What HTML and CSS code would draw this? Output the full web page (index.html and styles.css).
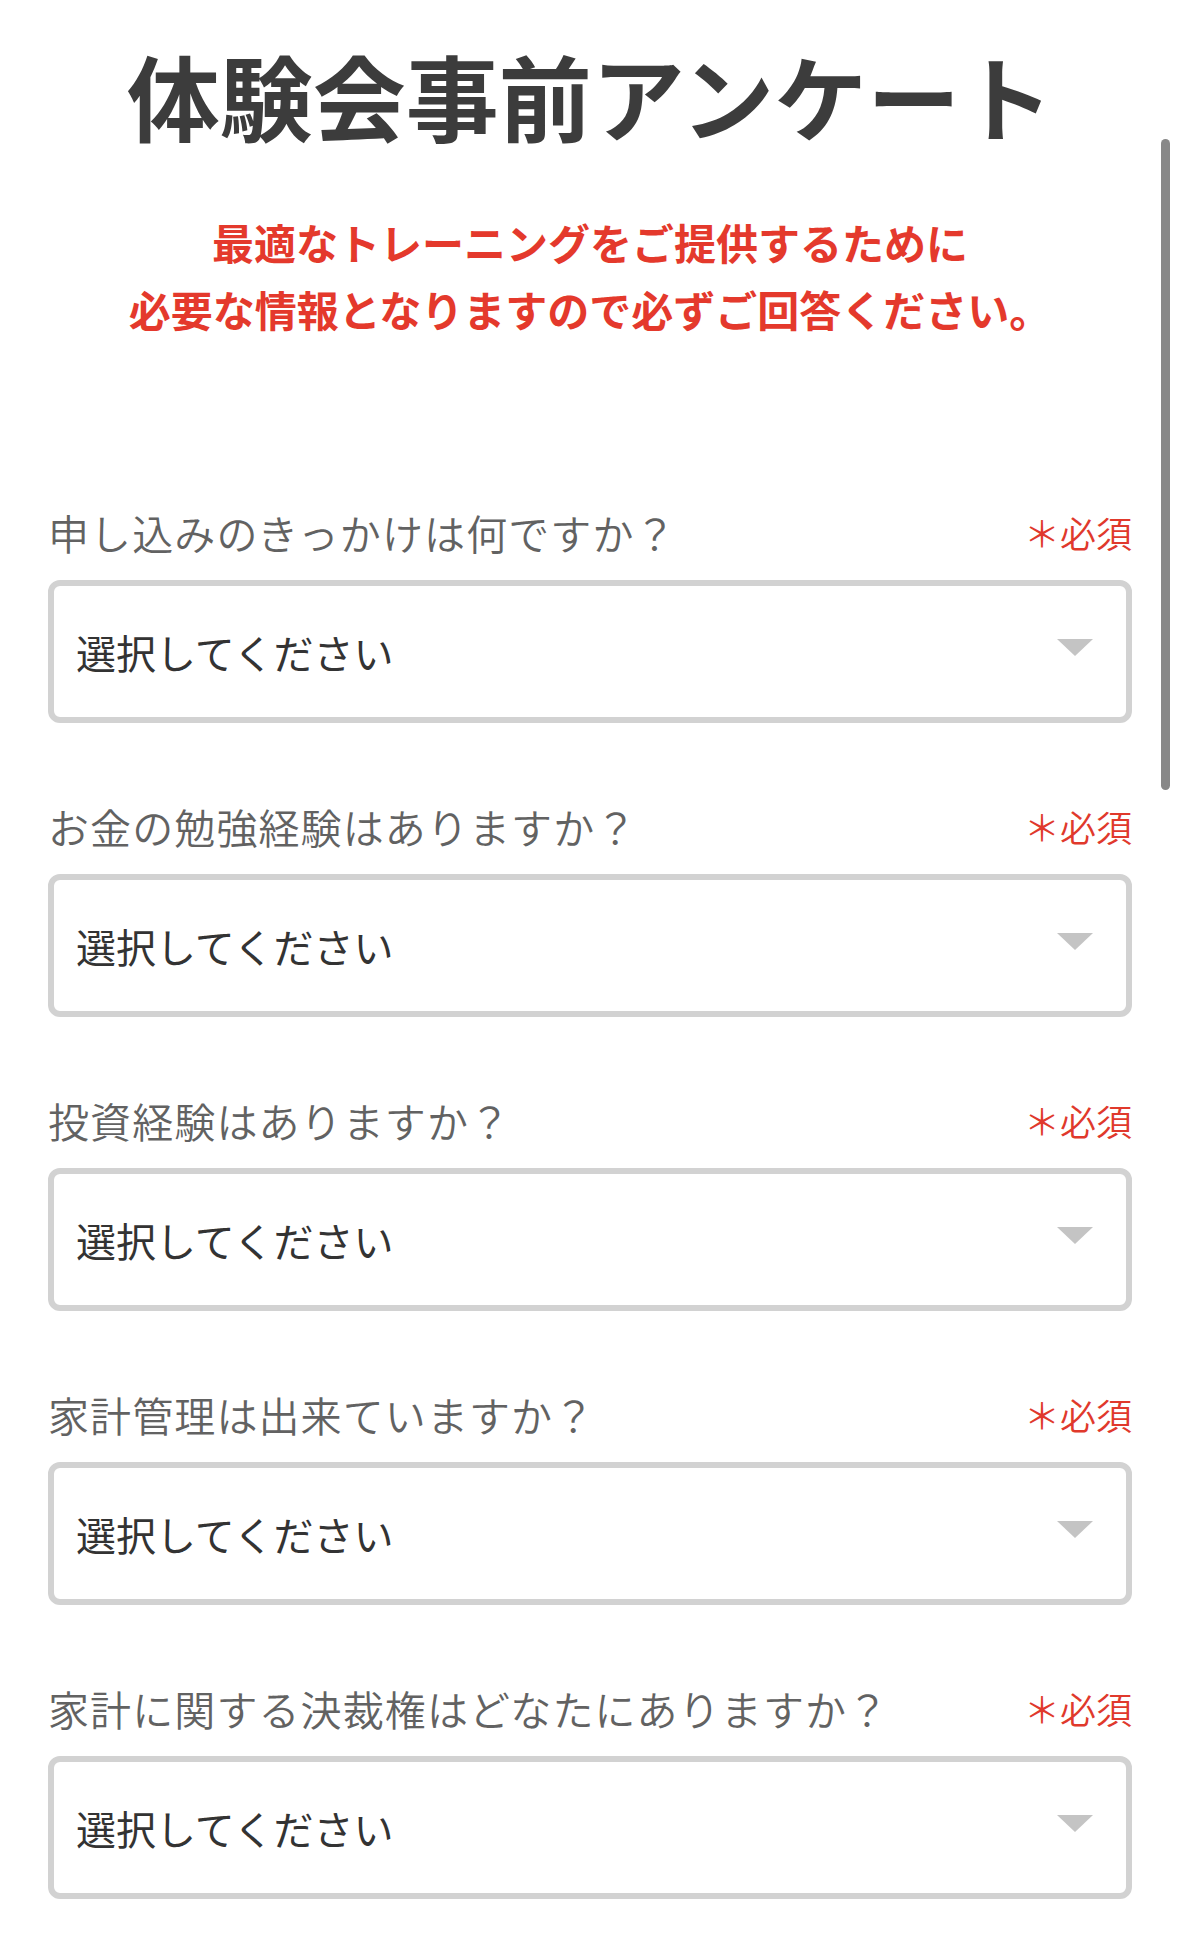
FILE: index.html
```html
<!DOCTYPE html>
<html lang="ja">
<head>
<meta charset="utf-8">
<title>体験会事前アンケート</title>
<link rel="stylesheet" href="styles.css">
</head>
<body>
<div class="page">
  <h1 class="title">体験会事前アンケート</h1>
  <p class="lead">最適なトレーニングをご提供するために<br>必要な情報となりますので必ずご回答ください。</p>

  <div class="form">
    <div class="field">
      <div class="field-head">
        <span class="label">申し込みのきっかけは何ですか？</span>
        <span class="req">＊必須</span>
      </div>
      <div class="select">
        <span class="select-text">選択してください</span>
        <svg class="arrow" viewBox="0 0 36 17"><polygon points="0,0 36,0 18,17" fill="#c4c4c4"/></svg>
      </div>
    </div>

    <div class="field">
      <div class="field-head">
        <span class="label">お金の勉強経験はありますか？</span>
        <span class="req">＊必須</span>
      </div>
      <div class="select">
        <span class="select-text">選択してください</span>
        <svg class="arrow" viewBox="0 0 36 17"><polygon points="0,0 36,0 18,17" fill="#c4c4c4"/></svg>
      </div>
    </div>

    <div class="field">
      <div class="field-head">
        <span class="label">投資経験はありますか？</span>
        <span class="req">＊必須</span>
      </div>
      <div class="select">
        <span class="select-text">選択してください</span>
        <svg class="arrow" viewBox="0 0 36 17"><polygon points="0,0 36,0 18,17" fill="#c4c4c4"/></svg>
      </div>
    </div>

    <div class="field">
      <div class="field-head">
        <span class="label">家計管理は出来ていますか？</span>
        <span class="req">＊必須</span>
      </div>
      <div class="select">
        <span class="select-text">選択してください</span>
        <svg class="arrow" viewBox="0 0 36 17"><polygon points="0,0 36,0 18,17" fill="#c4c4c4"/></svg>
      </div>
    </div>

    <div class="field">
      <div class="field-head">
        <span class="label">家計に関する決裁権はどなたにありますか？</span>
        <span class="req">＊必須</span>
      </div>
      <div class="select">
        <span class="select-text">選択してください</span>
        <svg class="arrow" viewBox="0 0 36 17"><polygon points="0,0 36,0 18,17" fill="#c4c4c4"/></svg>
      </div>
    </div>
  </div>
</div>
<div class="scrollbar"></div>
</body>
</html>
```

FILE: styles.css
```css
html, body {
  margin: 0;
  padding: 0;
  background: #ffffff;
}

body {
  font-family: "Noto Sans CJK JP", "Noto Sans", sans-serif;
  overflow: hidden;
}

.page {
  padding: 40px 47px 40px 48px;
}

.title {
  margin: 0;
  text-align: center;
  font-size: 93px;
  line-height: 110px;
  font-weight: 700;
  color: #3c3c3c;
  white-space: nowrap;
}

.lead {
  margin: 58px 0 0;
  text-align: center;
  font-size: 42px;
  line-height: 67px;
  font-weight: 700;
  color: #e4392c;
  white-space: nowrap;
}

.form {
  margin-top: 166px;
  display: flex;
  flex-direction: column;
  gap: 79px;
}

.field-head {
  display: flex;
  justify-content: space-between;
  align-items: center;
  height: 48px;
}

.label {
  font-size: 41px;
  line-height: 48px;
  font-weight: 350;
  letter-spacing: 1.1px;
  color: #626262;
  white-space: nowrap;
}

.req {
  font-size: 36px;
  line-height: 48px;
  font-weight: 350;
  color: #e0392c;
  white-space: nowrap;
}

.select {
  margin-top: 24px;
  height: 143px;
  box-sizing: border-box;
  border: 6px solid #d2d2d2;
  border-radius: 12px;
  display: flex;
  align-items: center;
  justify-content: space-between;
  padding: 0 33px 0 22px;
  background: #ffffff;
}

.select-text {
  font-size: 40px;
  line-height: 48px;
  color: #333333;
}

.arrow {
  display: block;
  width: 36px;
  height: 17px;
  margin-bottom: 8px;
}

.scrollbar {
  position: fixed;
  top: 139px;
  right: 9px;
  width: 9px;
  height: 651px;
  border-radius: 5px;
  background: #888888;
}
```
